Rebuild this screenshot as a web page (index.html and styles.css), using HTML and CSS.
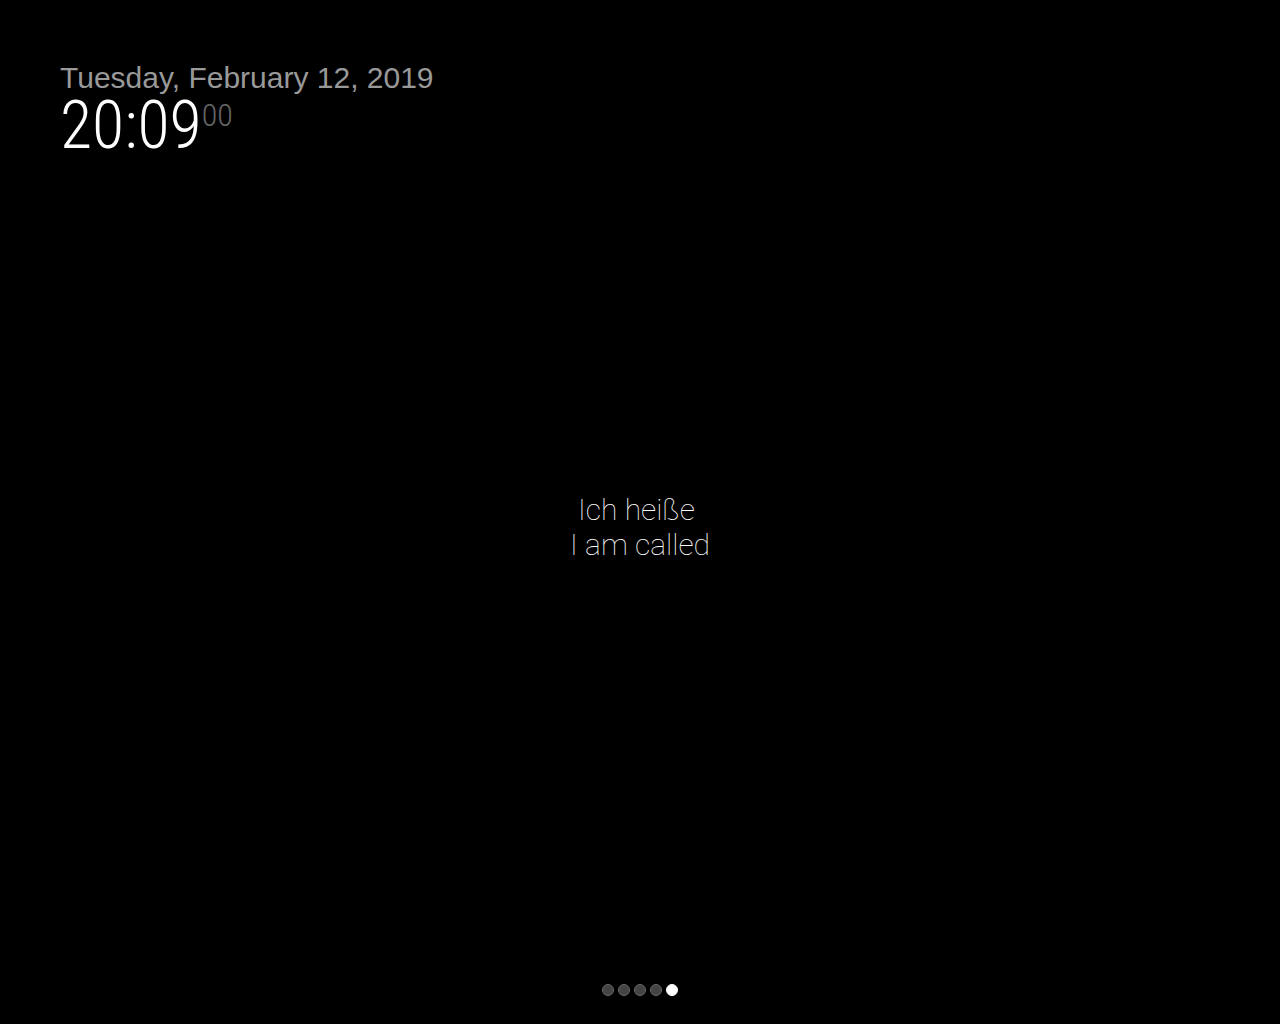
FILE: index.html
```html
<!DOCTYPE html>
<html>
<head>
<meta charset="utf-8">
<link rel="stylesheet" href="styles.css">
</head>
<body>
<div class="screen">
  <header class="clock">
    <div class="date">Tuesday, February 12, 2019</div>
    <div class="time"><span class="hm">20:09</span><span class="sec">00</span></div>
  </header>
  <main class="center">
    <div class="line">Ich heiße </div>
    <div class="line">I am called</div>
  </main>
  <footer class="dots">
    <span class="dot"></span><span class="dot"></span><span class="dot"></span><span class="dot"></span><span class="dot active"></span>
  </footer>
</div>
</body>
</html>
```
FILE: styles.css
```css
html, body { margin: 0; padding: 0; background: #000; }
.screen { width: 1280px; height: 1024px; display: flex; flex-direction: column; box-sizing: border-box; padding: 60px 0 0 0; }
.clock { padding-left: 60px; }
.date { font-family: "Liberation Sans", Arial, sans-serif; font-size: 30px; color: #999; line-height: 36px; }
.time { font-family: "Roboto Condensed", Roboto, sans-serif; font-weight: 300; color: #fff; line-height: 60px; display: flex; align-items: flex-start; }
.hm { font-size: 66px; }
.sec { font-size: 32px; color: #666; line-height: 38px; margin-left: 0; }
.center { flex: 1; display: flex; flex-direction: column; align-items: center; justify-content: center; font-family: Roboto, sans-serif; font-weight: 100; font-size: 30px; color: #fff; line-height: 35px; padding-bottom: 86px; }
.line { white-space: pre; }
.dots { display: flex; justify-content: center; gap: 4px; height: 40px; }
.dot { width: 10px; height: 10px; border-radius: 50%; background: #444; border: 1px solid #666; }
.dot.active { background: #fff; border-color: #fff; }
```
